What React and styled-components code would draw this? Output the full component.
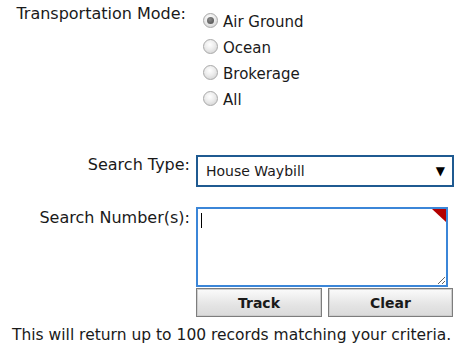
import styled, { createGlobalStyle } from "styled-components"

const GlobalStyle = createGlobalStyle`
  body {
    margin: 0;
    background: #fff;
    color: #1a1a1a;
    font-family: "DejaVu Sans", Verdana, sans-serif;
  }
`

const Form = styled.div`
  padding: 5px 0 0 12px;
  width: 450px;
`

const Row = styled.div`
  display: grid;
  grid-template-columns: 178px 1fr;
  column-gap: 6px;
  margin-top: ${(p) => p.$gap || 0}px;
`

const Label = styled.div`
  text-align: right;
  font-size: 16px;
  line-height: 18px;
  padding-top: ${(p) => p.$top || 0}px;
  padding-right: ${(p) => p.$inset || 0}px;
  white-space: nowrap;
`

const RadioList = styled.div`
  display: flex;
  flex-direction: column;
  margin-top: 2px;
`

const RadioItem = styled.label`
  display: flex;
  align-items: center;
  height: 26px;
  font-size: 15px;
`

const RadioDot = styled.span`
  position: relative;
  flex: none;
  width: 15px;
  height: 15px;
  margin: 0 5px 0 7px;
  box-sizing: border-box;
  border-radius: 50%;
  border: 1px solid #a9a9a9;
  background: radial-gradient(circle at 45% 35%, #ffffff 0%, #ececec 45%, #cbcbcb 100%);

  &::after {
    content: "";
    display: ${(p) => (p.$checked ? "block" : "none")};
    position: absolute;
    left: 3px;
    top: 3px;
    width: 7px;
    height: 7px;
    border-radius: 50%;
    background: radial-gradient(circle at 40% 35%, #8a8a8a, #4a4a4a);
  }
`

const RadioText = styled.span`
  padding-top: 4px;
`

const SelectBox = styled.div`
  display: flex;
  align-items: center;
  justify-content: space-between;
  width: 258px;
  height: 32px;
  box-sizing: border-box;
  border: 2px solid #1f5a91;
  padding: 0 7px 0 8px;
  font-size: 14px;
  background: #fff;
`

const Arrow = styled.span`
  font-size: 12px;
  color: #000;
`

const NoteWrap = styled.div`
  position: relative;
  width: 252px;
  height: 80px;
`

const Notes = styled.textarea`
  display: block;
  width: 100%;
  height: 100%;
  box-sizing: border-box;
  border: 2px solid #3b86d8;
  outline: none;
  margin: 0;
  padding: 4px;
  font-family: inherit;
  font-size: 14px;
  resize: both;
`

const Caret = styled.span`
  position: absolute;
  left: 5px;
  top: 6px;
  width: 1px;
  height: 15px;
  background: #000;
`

const Corner = styled.span`
  position: absolute;
  right: 2px;
  top: 2px;
  width: 0;
  height: 0;
  border-top: 13px solid #b30000;
  border-left: 14px solid transparent;
`

const Buttons = styled.div`
  display: grid;
  grid-template-columns: 126px 125px;
  column-gap: 6px;
  margin-top: 1px;
`

const Button = styled.button`
  height: 29px;
  margin: 0;
  border: 1px solid #7d7d7d;
  box-shadow: inset 0 0 0 1px #cdcdcd;
  background: linear-gradient(#fbfbfb, #e4e4e4 60%, #dadada);
  font-family: inherit;
  font-size: 14px;
  font-weight: bold;
  color: #1a1a1a;
`

const Note = styled.p`
  margin: 9px 0 0;
  font-size: 15.5px;
  line-height: 18px;
  white-space: nowrap;
`

const modes = ["Air Ground", "Ocean", "Brokerage", "All"]

export default function App() {
  return (
    <>
      <GlobalStyle />
      <Form>
        <Row>
          <Label $inset={4}>Transportation Mode:</Label>
          <RadioList>
            {modes.map((m, i) => (
              <RadioItem key={m}>
                <RadioDot $checked={i === 0} />
                <RadioText>{m}</RadioText>
              </RadioItem>
            ))}
          </RadioList>
        </Row>
        <Row $gap={44}>
          <Label $top={1}>Search Type:</Label>
          <SelectBox>
            <span>House Waybill</span>
            <Arrow>▼</Arrow>
          </SelectBox>
        </Row>
        <Row $gap={20}>
          <Label $top={2}>Search Number(s):</Label>
          <div>
            <NoteWrap>
              <Notes />
              <Caret />
              <Corner />
            </NoteWrap>
            <Buttons>
              <Button>Track</Button>
              <Button>Clear</Button>
            </Buttons>
          </div>
        </Row>
        <Note>This will return up to 100 records matching your criteria.</Note>
      </Form>
    </>
  )
}
